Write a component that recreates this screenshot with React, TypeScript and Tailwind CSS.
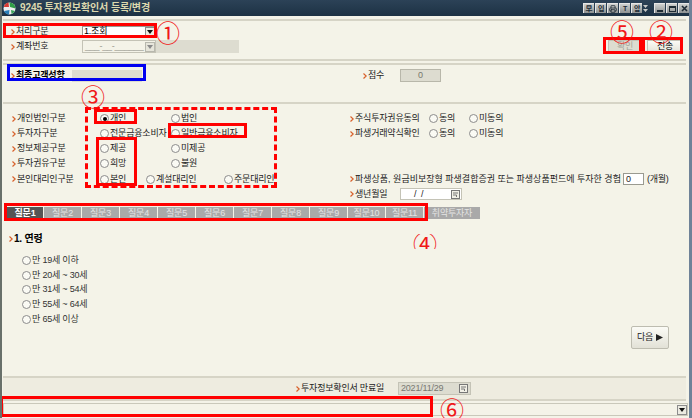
import React from "react";
import { Printer } from "lucide-react";

const Arrow = () => (
  <svg width="4" height="6" viewBox="0 0 4 6" className="shrink-0 mr-[1px]">
    <path d="M0.5 0.5 L3.2 3 L0.5 5.5" fill="none" stroke="#d8602a" strokeWidth="1.2" />
  </svg>
);

const Label = ({ children, bold }: { children: React.ReactNode; bold?: boolean }) => (
  <span className={`flex items-center whitespace-nowrap ${bold ? "font-bold text-black" : ""}`}>
    <Arrow />
    {children}
  </span>
);

const Radio = ({ label, checked, className }: { label: string; checked?: boolean; className?: string }) => (
  <span className={`flex items-center whitespace-nowrap ${className ?? ""}`}>
    <span className="w-[9px] h-[9px] rounded-full border border-[#8c8c8c] bg-[#fafaf4] flex items-center justify-center mr-[1px] shrink-0">
      {checked && <span className="w-[4px] h-[4px] rounded-full bg-black" />}
    </span>
    {label}
  </span>
);

const Sep = () => <div className="h-[2px] bg-[#d6d4c6] mr-[3px] ml-[1px]" />;

const Drop = ({ disabled }: { disabled?: boolean }) => (
  <span className={`w-[10px] h-[10px] border flex items-center justify-center shrink-0 ${disabled ? "border-[#b8b8ae] bg-[#e6e5da]" : "border-[#8c8c8c] bg-[#ecebe2]"}`}>
    <svg width="6" height="4" viewBox="0 0 6 4"><path d="M0 0H6L3 4Z" fill={disabled ? "#8a8a8a" : "#111"} /></svg>
  </span>
);

const Cal = () => (
  <svg width="9" height="9" viewBox="0 0 9 9" className="shrink-0">
    <rect x="0.5" y="0.5" width="8" height="8" fill="#f1f0e6" stroke="#777" />
    <path d="M2 3H7M2 5H5.5M5.5 5V7" stroke="#777" fill="none" />
  </svg>
);

const TitleBtn = ({ children, w = "w-[11px]" }: { children: React.ReactNode; w?: string }) => (
  <span className={`${w} h-[10px] bg-gradient-to-b from-[#cfd1cf] to-[#8e9292] border-[#e6e6e6] border-t border-l flex items-center justify-center text-[7px] leading-none text-[#1d2a33] font-bold overflow-hidden`}>
    {children}
  </span>
);

const tabs = ["질문2", "질문3", "질문4", "질문5", "질문6", "질문7", "질문8", "질문9", "질문10", "질문11"];
const ages = ["만 19세 이하", "만 20세 ~ 30세", "만 31세 ~ 54세", "만 55세 ~ 64세", "만 65세 이상"];

const Mark = ({ className }: { className: string }) => (
  <div className={`absolute border-[3px] border-[#f00] pointer-events-none ${className}`} />
);

const Num = ({ children, className }: { children: string; className: string }) => (
  <span className={`absolute text-[24px] leading-none w-[24px] h-[24px] text-center text-[#f01818] font-normal ${className}`}>{children}</span>
);

export default function App() {
  return (
    <div className="relative w-[692px] h-[418px] overflow-hidden flex flex-col bg-[#f4f3e8] text-[9px] leading-none tracking-[-0.2px] text-[#222] font-['Liberation_Sans','Noto_Sans_CJK_KR',sans-serif] border-l-2 border-l-[#68706a] border-r-[3px] border-r-[#6f8298]">
      {/* title bar */}
      <div className="h-[16px] -ml-[2px] -mr-[3px] shrink-0 bg-gradient-to-b from-[#2c4257] to-[#1d3244] flex items-center pl-[3px] pr-[3px]">
        <svg width="13" height="13" viewBox="0 0 13 13" className="mr-[4px]">
          <circle cx="6.5" cy="6.5" r="6" fill="#eeeeee" />
          <path d="M6.5 .5A6 6 0 0 1 12.5 6.5L7 5Z" fill="#2f9d46" />
          <path d="M.8 5A6 6 0 0 1 5.5 .6L6 5Z" fill="#d63a34" />
          <path d="M1 9A6 6 0 0 0 6 12.5L6.5 8Z" fill="#2a7fb8" />
          <path d="M8 8L12 9A6 6 0 0 1 8.5 12Z" fill="#3aa35a" />
        </svg>
        <span className="text-[10px] font-bold text-[#dcd8ae] tracking-[-0.1px]">9245 투자정보확인서 등록/변경</span>
        <div className="ml-auto flex items-center gap-[1px]">
          <TitleBtn>早</TitleBtn>
          <TitleBtn>입</TitleBtn>
          <TitleBtn><Printer size={8} strokeWidth={2.4} /></TitleBtn>
          <TitleBtn>T</TitleBtn>
          <TitleBtn>암</TitleBtn>
          <span className="w-[5px] h-[10px] flex flex-col items-center justify-center gap-[1px] mr-[5px]">
            <svg width="5" height="7" viewBox="0 0 5 7"><path d="M0 0H5L2.5 3ZM0 4H5L2.5 7Z" fill="#c8cac8" /></svg>
          </span>
          <TitleBtn><span className="w-[6px] h-[2px] mt-[4px] bg-[#1d2a33]" /></TitleBtn>
          <TitleBtn><span className="w-[7px] h-[6px] border border-t-2 border-[#1d2a33]" /></TitleBtn>
          <TitleBtn>
            <svg width="7" height="7" viewBox="0 0 7 7"><path d="M1 1L6 6M6 1L1 6" stroke="#1d2a33" strokeWidth="1.6" /></svg>
          </TitleBtn>
        </div>
      </div>

      <div className="mt-[3px]"><Sep /></div>

      {/* account rows */}
      <div className="h-[15px] mt-[3px] pl-[9px] flex items-center">
        <span className="w-[71px]"><Label>처리구분</Label></span>
        <div className="w-[74px] h-[12px] bg-white border border-[#9a9a90] flex items-center justify-between text-black pl-[1px]">
          1.조회
          <Drop />
        </div>
      </div>
      <div className="h-[15px] pl-[9px] pr-[6px] flex items-center">
        <span className="w-[71px]"><Label>계좌번호</Label></span>
        <div className="w-[74px] h-[13px] bg-[#f4f3e8] border border-[#c4c3b6] flex items-center justify-between text-[#9a9a90] pl-[2px]">
          ___-__-______
          <Drop disabled />
        </div>
        <div className="w-[83px] h-[13px] bg-[#dddcd0]" />
        <button className="ml-auto w-[34px] h-[13px] bg-[#dddcd0] border border-[#c4c3b6] text-[#a4a498]">확인</button>
        <button className="ml-[5px] w-[36px] h-[13px] bg-gradient-to-b from-[#fbfbf6] to-[#e4e3d8] border border-[#c4c3b6] text-black">전송</button>
      </div>
      <div className="mt-[5px]"><Sep /></div>
      <div className="mt-[2px]"><Sep /></div>

      {/* result */}
      <div className="h-[15px] mt-[3px] pl-[9px] flex items-center">
        <span className="w-[61px]"><Label bold>최종고객성향</Label></span>
        <div className="w-[70px] h-[12px] bg-[#dddcd0]" />
        <span className="ml-[221px] w-[37px]"><Label>점수</Label></span>
        <div className="w-[41px] h-[13px] bg-[#dddcd0] border border-[#b8b7aa] flex items-center justify-center text-[#77776c]">0</div>
      </div>
      <div className="mt-[19px]"><Sep /></div>

      {/* classification */}
      <div className="mt-[7px] pl-[10px] flex flex-col">
        <div className="h-[15px] flex items-center">
          <span className="w-[88px]"><Label>개인법인구분</Label></span>
          <Radio label="개인" checked className="w-[71px]" />
          <Radio label="법인" className="w-[179px]" />
          <span className="w-[79px]"><Label>주식투자권유동의</Label></span>
          <Radio label="동의" className="w-[40px]" />
          <Radio label="미동의" />
        </div>
        <div className="h-[15px] flex items-center">
          <span className="w-[88px]"><Label>투자자구분</Label></span>
          <Radio label="전문금융소비자" className="w-[71px]" />
          <Radio label="일반금융소비자" className="w-[179px]" />
          <span className="w-[79px]"><Label>파생거래약식확인</Label></span>
          <Radio label="동의" className="w-[40px]" />
          <Radio label="미동의" />
        </div>
        <div className="h-[15px] flex items-center">
          <span className="w-[88px]"><Label>정보제공구분</Label></span>
          <Radio label="제공" className="w-[71px]" />
          <Radio label="미제공" />
        </div>
        <div className="h-[15px] flex items-center">
          <span className="w-[88px]"><Label>투자권유구분</Label></span>
          <Radio label="희망" className="w-[71px]" />
          <Radio label="불원" />
        </div>
        <div className="h-[16px] flex items-center">
          <span className="w-[88px]"><Label>본인대리인구분</Label></span>
          <Radio label="본인" className="w-[46px]" />
          <Radio label="계설대리인" className="w-[78px]" />
          <Radio label="주문대리인" className="w-[126px]" />
          <span className="tracking-[0px]"><Label>파생상품, 원금비보장형 파생결합증권 또는 파생상품펀드에 투자한 경험</Label></span>
          <span className="ml-[2px] flex items-center">
            <span className="w-[21px] h-[12px] bg-white border border-[#9a9a90] flex items-center pl-[2px] mr-[3px]">0</span>
            (개월)
          </span>
        </div>
        <div className="h-[14px] flex items-center pl-[338px]">
          <span className="w-[50px]"><Label>생년월일</Label></span>
          <div className="w-[62px] h-[12px] bg-white border border-[#c4c3b6] flex items-center justify-between pl-[13px] pr-[1px]">
            / &nbsp;/
            <Cal />
          </div>
        </div>
      </div>

      {/* tabs */}
      <div className="mt-[6px] ml-[5px] h-[12px] flex text-[#e4e4e4]">
        <div className="w-[36px] bg-[#555555] text-white font-bold flex items-center justify-center">질문1</div>
        {tabs.map((t) => (
          <div key={t} className="w-[38px] bg-[#a9a9a9] border-l border-l-[#f4f3e8] flex items-center justify-center">{t}</div>
        ))}
        <div className="w-[57px] bg-[#a9a9a9] border-l border-l-[#f4f3e8] flex items-center justify-center">취약투자자</div>
      </div>

      {/* question */}
      <div className="mt-[15px] ml-[7px] h-[10px] flex items-center text-[10px]">
        <Label bold>1. 연령</Label>
      </div>
      <div className="mt-[9px] ml-[20px] flex flex-col text-[#333]">
        {ages.map((a) => (
          <div key={a} className="h-[14.7px] flex items-center">
            <Radio label={a} />
          </div>
        ))}
      </div>
      <div className="flex justify-end pr-[20px]">
        <button className="w-[38px] h-[23px] bg-gradient-to-b from-[#fbfbf6] to-[#e2e1d6] border border-[#bdbcb0] rounded-[2px] flex items-center justify-center gap-[3px]">
          다음
          <svg width="7" height="7" viewBox="0 0 7 7"><path d="M0 0L7 3.5L0 7Z" fill="#222" /></svg>
        </button>
      </div>

      {/* footer */}
      <div className="mt-auto">
        <Sep />
        <div className="h-[21px] bg-[#eeece0] mr-[3px] ml-[1px] flex items-center pl-[293px]">
          <span className="w-[102px]"><Label>투자정보확인서 만료일</Label></span>
          <div className="w-[73px] h-[13px] bg-[#dddcd0] border border-[#c4c3b6] flex items-center justify-between pl-[2px] pr-[2px] text-[#777770]">
            2021/11/29
            <Cal />
          </div>
        </div>
        <Sep />
        <div className="mt-[2px] mb-[2px] h-[13px] mr-[1px] ml-[1px] border border-[#c9c8ba] bg-[#f4f3e8] flex items-center justify-end">
          <Drop />
        </div>
      </div>

      {/* annotations */}
      <Mark className="left-[1px] top-[23px] w-[154px] h-[15px]" />
      <Mark className="left-[601px] top-[37px] w-[39px] h-[17px]" />
      <Mark className="left-[640px] top-[37px] w-[41px] h-[17px]" />
      <div className="absolute left-[5px] top-[64px] w-[139px] h-[17px] border-[3px] border-[#0000f0]" />
      <div className="absolute left-[83px] top-[107px] w-[192px] h-[81px] border-[3px] border-dashed border-[#f00]" />
      <Mark className="left-[92px] top-[109px] w-[43px] h-[15px]" />
      <Mark className="left-[166px] top-[123px] w-[79px] h-[15px]" />
      <Mark className="left-[94px] top-[137px] w-[41px] h-[49px]" />
      <Mark className="left-[2px] top-[203px] w-[424px] h-[18px]" />
      <Mark className="-left-[2px] top-[396px] w-[433px] h-[21px]" />
      <Num className="left-[154px] top-[22px]">①</Num>
      <Num className="left-[647px] top-[21px]">②</Num>
      <Num className="left-[608px] top-[21px]">⑤</Num>
      <Num className="left-[79px] top-[86px]">③</Num>
      <div className="absolute left-[409px] top-[234px] w-[28px] h-[15px] overflow-hidden">
        <Num className="left-[2px] top-[-1px]">④</Num>
      </div>
      <Num className="left-[438px] top-[399px]">⑥</Num>
    </div>
  );
}
